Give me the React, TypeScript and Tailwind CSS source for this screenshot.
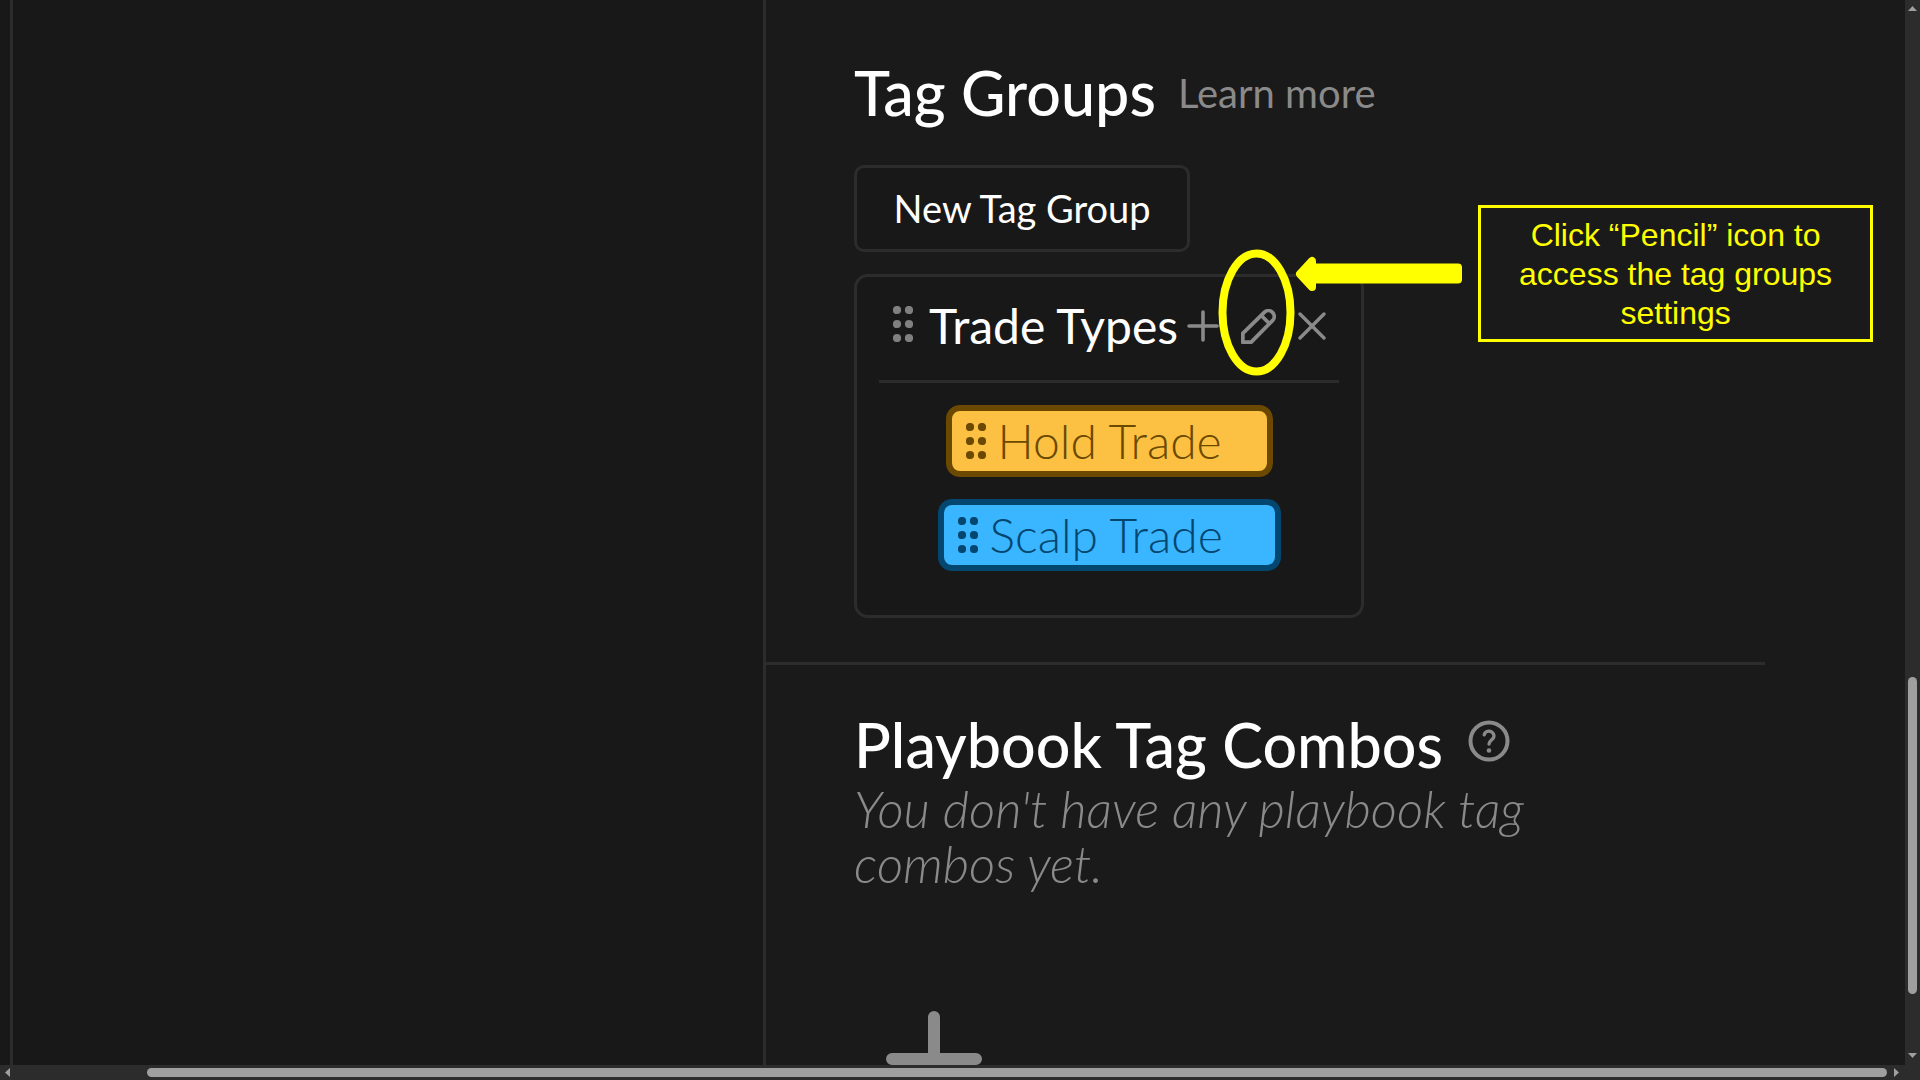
import type { ReactNode } from "react";
import clsx from "clsx";

export default function App() {
  return (
    <div className="flex h-screen flex-col overflow-hidden bg-[#1a1a1a] font-['Lato','Open_Sans',sans-serif] text-white">
      <div className="flex min-h-0 flex-1">
        <aside className="flex w-[39.9%] shrink-0 border-r-3 border-[#2c2c2c] bg-[#181818]">
          <div className="w-[13px] border-r-3 border-[#2c2c2c]" />
        </aside>

        <main className="min-w-0 flex-1 overflow-hidden">
          <TagGroupsSection />
          <PlaybookSection />
        </main>

        <VerticalScrollbar />
      </div>
      <HorizontalScrollbar />
    </div>
  );
}

function TagGroupsSection() {
  return (
    <section className="mr-[140px] border-b-3 border-[#2c2c2c] pt-[59px] pb-[44px] pl-[88px]">
      <div className="flex items-center gap-[22px]">
        <h2 className="text-[61px] leading-[68px] font-medium">Tag Groups</h2>
        <a href="#learn-more" className="text-[40px] leading-[44px] text-[#8a8a8a]">
          Learn more
        </a>
      </div>

      <button
        type="button"
        className="mt-[38px] flex h-[87px] w-[336px] items-center justify-center rounded-[10px] border-3 border-[#2c2c2c] bg-[#181818] text-[38px]"
      >
        New Tag Group
      </button>

      <div className="relative mt-[22px] w-[510px]">
        <TagGroupCard />
        <Callout />
      </div>
    </section>
  );
}

function TagGroupCard() {
  return (
    <div className="rounded-[14px] border-3 border-[#2c2c2c] bg-[#181818] px-[22px] pb-[44px]">
      <div className="flex h-[106px] items-center justify-between border-b-3 border-[#2c2c2c] pr-[13px] pb-[5px] pl-[14px]">
        <div className="flex items-center gap-4">
          <Grip className="mb-1 text-[#808080]" />
          <h3 className="text-[48px] leading-[54px] whitespace-nowrap">Trade Types</h3>
        </div>
        <div className="flex items-center gap-[22px] text-[#8a8a8a]">
          <IconButton label="Add tag">
            <svg width="32" height="32" viewBox="0 0 32 32" fill="none" stroke="currentColor" strokeWidth="3.6" strokeLinecap="round">
              <path d="M16 2v28M2 16h28" />
            </svg>
          </IconButton>
          <IconButton label="Edit tag group">
            <svg width="35" height="35" viewBox="0 0 35 35" fill="none" stroke="currentColor" strokeWidth="3.8" strokeLinejoin="round">
              <path d="M1.800 33.200v-8.800L23.300 3.400a5.800 5.800 0 0 1 8.200 0a5.800 5.800 0 0 1 0 8.200L10.200 33.200z" />
              <path d="M20.300 6.500l8 8" />
            </svg>
          </IconButton>
          <IconButton label="Delete tag group">
            <svg width="28" height="28" viewBox="0 0 28 28" fill="none" stroke="currentColor" strokeWidth="3.4" strokeLinecap="round">
              <path d="M2 2l24 24M26 2L2 26" />
            </svg>
          </IconButton>
        </div>
      </div>

      <ul className="flex flex-col items-center gap-[22px] pt-[22px]">
        <Tag name="Hold Trade" className="w-[327px] border-[#6b4900] bg-[#fcc142] text-[#6b4900]" />
        <Tag name="Scalp Trade" className="w-[343px] border-[#034770] bg-[#3ab5ff] text-[#034770]" />
      </ul>
    </div>
  );
}

function IconButton({ label, children }: { label: string; children: ReactNode }) {
  return (
    <button type="button" aria-label={label}>
      {children}
    </button>
  );
}

function Tag({ name, className }: { name: string; className: string }) {
  return (
    <li className={clsx("flex h-[72px] items-center gap-3 rounded-[14px] border-6 pl-[14px]", className)}>
      <Grip />
      <span className="text-[48px] leading-[54px] font-light whitespace-nowrap">{name}</span>
    </li>
  );
}

function Grip({ className }: { className?: string }) {
  return (
    <svg width="20" height="36" viewBox="0 0 20 36" fill="currentColor" className={clsx("shrink-0", className)}>
      {[4, 18, 32].map((y) => (
        <g key={y}>
          <circle cx="4" cy={y} r="4.100" />
          <circle cx="16" cy={y} r="4.100" />
        </g>
      ))}
    </svg>
  );
}

// Ring around the pencil, with the arrow that leads to it from the note
function Callout() {
  return (
    <div className="pointer-events-none absolute -top-[69px] left-[364px] flex items-start gap-4">
      <svg width="244" height="171" viewBox="0 0 244 171" className="shrink-0">
        <ellipse cx="38.500" cy="107.500" rx="34" ry="59" fill="none" stroke="#ffff00" strokeWidth="8" />
        <path
          d="M82 69L94 56v6.500h146v12H94V82z"
          fill="#ffff00"
          stroke="#ffff00"
          strokeWidth="8"
          strokeLinejoin="round"
        />
      </svg>
      <p className="h-[137px] w-[395px] border-3 border-[#ffff00] px-8 pt-2 text-center font-['Liberation_Sans',Arial,sans-serif] text-[32px] leading-[39px] text-[#ffff00]">
        Click “Pencil” icon to access the tag groups settings
      </p>
    </div>
  );
}

function PlaybookSection() {
  return (
    <section className="pt-[46px] pl-[88px]">
      <div className="flex items-center gap-[25px]">
        <h2 className="text-[61px] leading-[68px] font-medium">Playbook Tag Combos</h2>
        <button type="button" aria-label="Help" className="mb-2 text-[#8a8a8a]">
          <svg width="42" height="42" viewBox="0 0 42 42" fill="none" stroke="currentColor" strokeWidth="4" strokeLinecap="round">
            <circle cx="21" cy="21" r="18.500" />
            <path d="M16.200 14.800a5 5 0 0 1 9.800 1.200c0 3.800-5 4.300-5 8" strokeWidth="3.400" />
            <circle cx="21" cy="30.500" r="2.300" fill="currentColor" stroke="none" />
          </svg>
        </button>
      </div>
      <p className="mt-[2px] w-[720px] text-[51px] leading-[55px] font-light text-[#8a8a8a] italic">
        You don't have any playbook tag combos yet.
      </p>
      <button type="button" aria-label="Add playbook tag combo" className="mt-[120px] ml-[32px] block text-[#8a8a8a]">
        <svg width="96" height="96" viewBox="0 0 96 96" fill="none" stroke="currentColor" strokeWidth="12" strokeLinecap="round">
          <path d="M48 6v84M6 48h84" />
        </svg>
      </button>
    </section>
  );
}

function VerticalScrollbar() {
  return (
    <div className="flex w-[15px] shrink-0 flex-col items-center bg-[#2c2c2c] pt-[6px] pb-[7px] text-[#9f9f9f]">
      <svg width="9" height="5" viewBox="0 0 9 5" fill="currentColor">
        <path d="M0 5L4.500 0L9 5z" />
      </svg>
      <div className="flex-[666]" />
      <div className="w-[9px] flex-[317] rounded-full bg-[#9f9f9f]" />
      <div className="flex-[59]" />
      <svg width="9" height="5" viewBox="0 0 9 5" fill="currentColor">
        <path d="M0 0L4.500 5L9 0z" />
      </svg>
    </div>
  );
}

function HorizontalScrollbar() {
  return (
    <div className="flex h-[15px] shrink-0 items-center bg-[#2c2c2c] pr-[21px] pl-[5px] text-[#9f9f9f]">
      <svg width="5" height="9" viewBox="0 0 5 9" fill="currentColor">
        <path d="M5 0L0 4.500L5 9z" />
      </svg>
      <div className="flex-[137]" />
      <div className="h-[9px] flex-[1740] rounded-full bg-[#9f9f9f]" />
      <div className="flex-[7]" />
      <svg width="5" height="9" viewBox="0 0 5 9" fill="currentColor">
        <path d="M0 0L5 4.500L0 9z" />
      </svg>
    </div>
  );
}
